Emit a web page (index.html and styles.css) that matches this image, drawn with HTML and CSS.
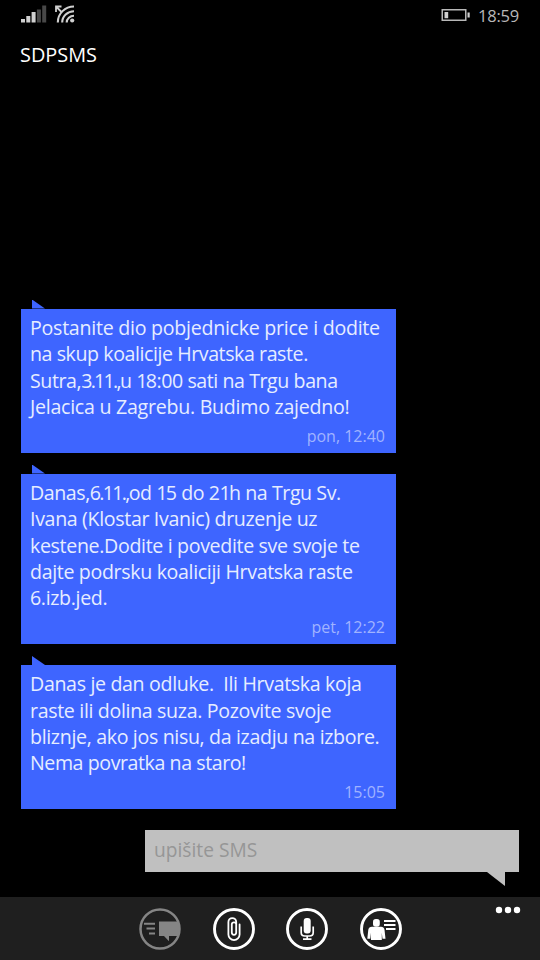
FILE: index.html
```html
<!DOCTYPE html>
<html lang="hr">
<head>
<meta charset="utf-8">
<title>SDPSMS</title>
<link rel="stylesheet" href="styles.css">
</head>
<body>
<div class="phone">
  <header class="status">
    <svg class="signals" width="56" height="20" viewBox="0 0 56 20">
      <path fill="#d0d0d0" d="M1 14h4v3.500H1zM6.300 11h4v6.500h-4zM11.600 7h4v10.500h-4z"/>
      <path fill="#484848" d="M16.900 4.500h4v13h-4zM22.200 .5h4v17h-4z"/>
      <g fill="none" stroke="#d0d0d0" stroke-width="2.100">
        <path d="M37.800 17.500C37.800 8.500 45 1.500 54 1.500M42.200 17.500C42.200 11.200 47.500 6.200 54 6.200M46.700 17.500C46.700 13.700 50 10.800 54 10.800"/>
        <path d="M36.500 2L41.500 7M36 7V1.500H41.500" stroke-width="1.800"/>
      </g>
      <circle cx="52.200" cy="15.500" r="2.100" fill="#d0d0d0"/>
    </svg>
    <svg class="battery" width="29" height="13" viewBox="0 0 29 13">
      <rect x="1.250" y=".75" width="23.500" height="10.500" fill="none" stroke="#b8b8b8" stroke-width="1.500"/>
      <path fill="#d0d0d0" d="M3.500 3h3.700v6.200H3.500zM26.500 3.500h2.200v5h-2.200z"/>
    </svg>
    <span class="clock">18:59</span>
  </header>
  <h1 class="contact">SDPSMS</h1>
  <main class="thread">
    <section class="bubble">
      <p><span class="line loose">Postanite dio pobjednicke price i dodite</span><span class="line snug">na skup koalicije Hrvatska raste.</span><span class="line snug">Sutra,<span class="tight">3.11.,</span>u <span class="tight">1</span>8:00 sati na Trgu bana</span><span class="line loose">Jelacica u Zagrebu. Budimo zajedno!</span></p>
      <time>pon, 12:40</time>
    </section>
    <section class="bubble">
      <p><span class="line snug">Danas,<span class="tight">6.11.,</span>od <span class="tight">1</span>5 do 2<span class="tight">1</span>h na Trgu Sv.</span><span class="line">Ivana (Klostar Ivanic) druzenje uz</span><span class="line">kestene.Dodite i povedite sve svoje te</span><span class="line">dajte podrsku koaliciji Hrvatska raste</span><span class="line">6.izb.jed.</span></p>
      <time>pet, 12:22</time>
    </section>
    <section class="bubble">
      <p><span class="line">Danas je dan odluke.  Ili Hrvatska koja</span><span class="line">raste ili dolina suza. Pozovite svoje</span><span class="line">bliznje, ako jos nisu, da izadju na izbore.</span><span class="line snug">Nema povratka na staro!</span></p>
      <time>15:05</time>
    </section>
    <div class="compose">upišite SMS</div>
  </main>
  <footer class="appbar">
    <svg class="action" width="42" height="42" viewBox="0 0 42 42">
      <circle cx="21" cy="21" r="19.500" fill="none" stroke="#858585" stroke-width="2.500"/>
      <path fill="#858585" d="M20 13.500h20v14.500H30v5.200L25 28H20zM5 14.800h11v2H5zM7.500 19.600H16v2H7.500zM10 24.400h6v2h-6z"/>
    </svg>
    <svg class="action" width="42" height="42" viewBox="0 0 42 42">
      <circle cx="21" cy="21" r="19.500" fill="none" stroke="#fff" stroke-width="2.900"/>
      <path fill="none" stroke="#fff" stroke-width="1.800" stroke-linecap="round" d="M18.800 16v8.600a2.200 2.200 0 0 0 4.400 0V14a3.900 3.900 0 0 0-7.800 0v12.500a5.600 5.600 0 0 0 11.200 0V16.500M18.800 16.500a2 2 0 0 1 4.400 0"/>
    </svg>
    <svg class="action" width="42" height="42" viewBox="0 0 42 42">
      <circle cx="21" cy="21" r="19.500" fill="none" stroke="#fff" stroke-width="2.900"/>
      <rect x="17.700" y="10" width="7" height="15.500" rx="3" fill="#fff"/>
      <path fill="none" stroke="#fff" stroke-width="1.700" d="M15.200 18.500v6q0 3.500 3.500 3.500h5q3.500 0 3.500-3.500v-6M21.200 28v3M17 31.200h8.500"/>
    </svg>
    <svg class="action" width="42" height="42" viewBox="0 0 42 42">
      <circle cx="21" cy="21" r="19.500" fill="none" stroke="#fff" stroke-width="2.900"/>
      <rect x="13" y="11" width="6.800" height="7.800" rx="2.800" fill="#fff"/>
      <path fill="#fff" d="M12 18.800h9q3 0 3.500 3l1 9h-3l-.7-6v7.300H11v-7.300l-.7 6h-3l1-9q.5-3 3.700-3zM24 12h11.500v1.900H24zM24 16h11.500v1.900H24zM26 20h9.500v1.900H26z"/>
    </svg>
    <svg class="more" width="26" height="8" viewBox="0 0 26 8"><g fill="#fff"><circle cx="4" cy="4" r="3.200"/><circle cx="13" cy="4" r="3.200"/><circle cx="22" cy="4" r="3.200"/></g></svg>
  </footer>
</div>
</body>
</html>
```
FILE: styles.css
```css
body {
  margin: 0;
  background: #000;
  font-family: "Open Sans", "Noto Sans", sans-serif;
}
.phone {
  width: 540px;
  height: 960px;
  display: flex;
  flex-direction: column;
  overflow: hidden;
}
.status {
  height: 32px;
  flex: none;
  display: flex;
  align-items: flex-start;
  padding: 0 21px 0 20px;
}
.signals { margin-top: 5px; }
.battery { margin: 9px 8px 0 auto; }
.clock {
  font-size: 16.5px;
  letter-spacing: -.2px;
  line-height: 22px;
  margin-top: 5px;
  color: #b8b8b8;
}
.contact {
  margin: 10px 0 0 20px;
  font-size: 19.9px;
  line-height: 26px;
  font-weight: 400;
  color: #fff;
}
.thread {
  flex: 1;
  display: flex;
  flex-direction: column;
  justify-content: flex-end;
  padding: 0 21px 25px;
}
.bubble {
  position: relative;
  box-sizing: border-box;
  width: 375px;
  margin-bottom: 21px;
  padding: 5px 11px 5px 9px;
  background: #3e65ff;
  color: #e6edff;
}
.bubble::before {
  content: "";
  position: absolute;
  left: 11px;
  top: -9px;
  width: 13px;
  height: 9px;
  background: #3e65ff;
  clip-path: polygon(0 0, 100% 100%, 0 100%);
}
.bubble p {
  margin: 0;
  padding-top: 1.2px;
  font-size: 19.6px;
  line-height: 26.4px;
}
.line {
  display: block;
  white-space: pre;
  letter-spacing: -.34px;
}
.loose { letter-spacing: -.26px; }
.snug { letter-spacing: -.43px; }
.tight { letter-spacing: -1.7px; }
.bubble time {
  display: block;
  margin-top: 3.2px;
  text-align: right;
  font-size: 16px;
  line-height: 24px;
  color: #a0b3ff;
}
.compose {
  position: relative;
  box-sizing: border-box;
  align-self: flex-end;
  width: 374px;
  height: 42px;
  padding-left: 9px;
  background: #c0c0c0;
  color: #969696;
  font-size: 19.2px;
  line-height: 40px;
}
.compose::after {
  content: "";
  position: absolute;
  right: 14px;
  top: 42px;
  width: 18px;
  height: 14px;
  background: #c0c0c0;
  clip-path: polygon(0 0, 100% 0, 100% 100%);
}
.appbar {
  position: relative;
  box-sizing: border-box;
  flex: none;
  height: 63px;
  display: flex;
  gap: 31.5px;
  padding: 11px 0 0 139px;
  background: #1f1f1f;
}
.more {
  position: absolute;
  right: 19px;
  top: 9px;
}
```
